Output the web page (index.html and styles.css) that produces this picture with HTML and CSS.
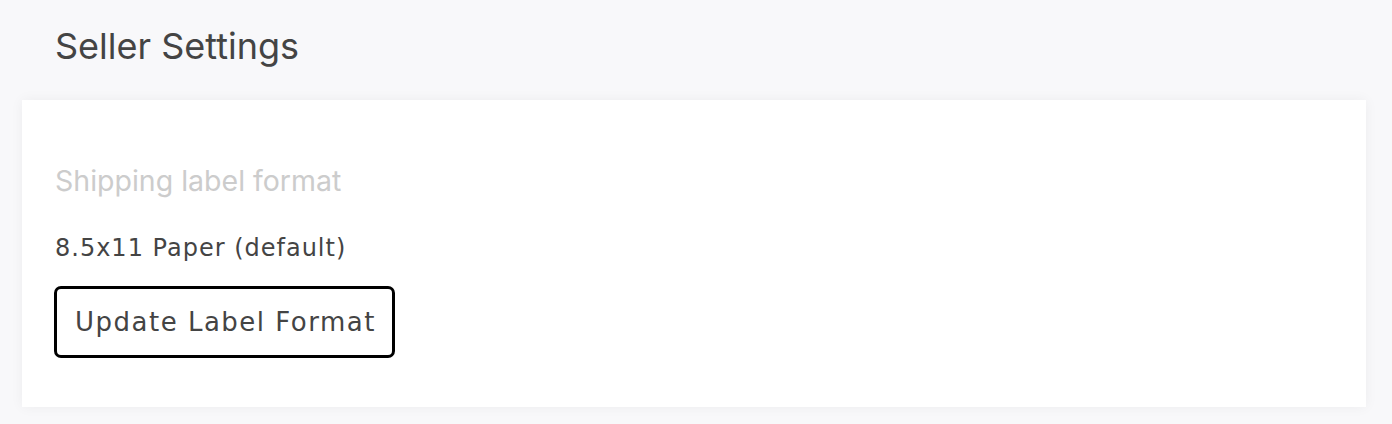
FILE: index.html
```html
<!DOCTYPE html>
<html lang="en">
<head>
<meta charset="utf-8">
<title>Seller Settings</title>
<link rel="stylesheet" href="styles.css">
</head>
<body>
<main class="page">
  <h1 class="page-title">Seller Settings</h1>
  <section class="card">
    <div class="field-label">Shipping label format</div>
    <div class="field-value">8.5x11 Paper (default)</div>
    <button class="btn-outline" type="button">Update Label Format</button>
  </section>
</main>
</body>
</html>
```
FILE: styles.css
```css
html, body {
  margin: 0;
  padding: 0;
  background: #f8f8fa;
}
.page {
  padding: 21px 26px 18px 22px;
  font-family: Inter, "Noto Sans", sans-serif;
}
.page-title {
  margin: 0 0 29px 33px;
  font-size: 36px;
  font-weight: 400;
  line-height: 50px;
  color: #444;
}
.card {
  background: #fff;
  box-shadow: 0 0 12px rgba(0,0,0,0.05);
  padding: 62px 33px 49px 32px;
  display: flex;
  flex-direction: column;
  align-items: flex-start;
}
.field-label {
  margin-left: 1px;
  font-size: 28.5px;
  line-height: 38px;
  color: #cccccc;
}
.field-value {
  margin-top: 32px;
  margin-left: 1px;
  font-family: "DejaVu Sans", sans-serif;
  font-size: 24px;
  letter-spacing: 1px;
  line-height: 32px;
  color: #444;
}
.btn-outline {
  margin-top: 22px;
  padding: 0 16px 0 18px;
  height: 72px;
  border: 3px solid #000;
  border-radius: 7px;
  background: #fff;
  font-family: "DejaVu Sans", sans-serif;
  font-size: 26px;
  letter-spacing: 1.5px;
  color: #444;
  cursor: pointer;
}
```
